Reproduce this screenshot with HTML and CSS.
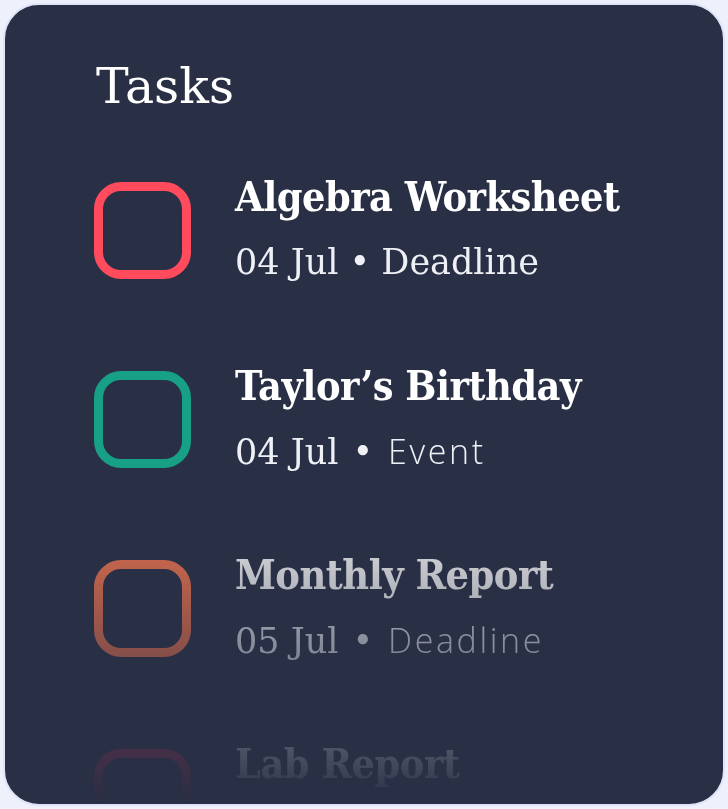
FILE: index.html
```html
<!DOCTYPE html>
<html lang="en">
<head>
<meta charset="utf-8">
<title>Tasks</title>
<link rel="stylesheet" href="styles.css">
</head>
<body>
<div class="card">
  <h1 class="heading">Tasks</h1>
  <ul class="list">
    <li class="task">
      <span class="check check-red"></span>
      <div class="info">
        <div class="name">Algebra Worksheet</div>
        <div class="meta"><span class="date">04 Jul • Deadline</span></div>
      </div>
    </li>
    <li class="task">
      <span class="check check-teal"></span>
      <div class="info">
        <div class="name">Taylor’s Birthday</div>
        <div class="meta"><span class="date">04 Jul</span><span class="dot">•</span><span class="kind">Event</span></div>
      </div>
    </li>
    <li class="task">
      <span class="check check-orange"></span>
      <div class="info">
        <div class="name">Monthly Report</div>
        <div class="meta"><span class="date">05 Jul</span><span class="dot">•</span><span class="kind">Deadline</span></div>
      </div>
    </li>
    <li class="task task-last">
      <span class="check check-pink"></span>
      <div class="info">
        <div class="name">Lab Report</div>
      </div>
    </li>
  </ul>
</div>
</body>
</html>
```
FILE: styles.css
```css
html, body {
  margin: 0;
  padding: 0;
}
body {
  background: #eef1fb;
  width: 728px;
  height: 809px;
  overflow: hidden;
}
.card {
  margin: 3px;
  width: 722px;
  height: 803px;
  box-sizing: border-box;
  border: 2px solid #dfe4f8;
  border-radius: 36px;
  background: #292f45;
  overflow: hidden;
  padding: 57px 0 0 89px;
  font-family: "DejaVu Serif", serif;
  color: #ffffff;
}
.heading {
  margin: 0 0 66px 0;
  padding-left: 2px;
  font-size: 49px;
  line-height: 49px;
  font-weight: normal;
}
.list {
  list-style: none;
  margin: 0;
  padding: 0;
  -webkit-mask-image: linear-gradient(to bottom, #000 0px, #000 300px, rgba(0,0,0,0) 627px);
  mask-image: linear-gradient(to bottom, #000 0px, #000 300px, rgba(0,0,0,0) 627px);
}
.task {
  display: flex;
  align-items: flex-start;
  gap: 44px;
  height: 189px;
}
.task-last {
  height: 120px;
}
.check {
  flex: none;
  width: 97px;
  height: 97px;
  box-sizing: border-box;
  border: 9px solid;
  border-radius: 27px;
  margin-top: 5px;
}
.check-red { border-color: #ff4b5c; }
.check-teal { border-color: #17a086; }
.check-orange { border-color: #f7764f; }
.check-pink { border-color: #d23352; }
.name {
  font-size: 41px;
  line-height: 41px;
  font-weight: bold;
  font-stretch: condensed;
  letter-spacing: -0.5px;
  white-space: nowrap;
}
.meta {
  margin-top: 26px;
  font-size: 35px;
  line-height: 36px;
  color: #eef0f6;
  white-space: nowrap;
}
.date {
  font-family: "DejaVu Serif", serif;
  font-weight: normal;
}
.dot {
  font-family: "DejaVu Serif", serif;
  margin: 0 15px 0 14px;
}
.kind {
  font-family: "Open Sans", sans-serif;
  font-weight: 300;
  font-size: 34px;
  letter-spacing: 2.6px;
}
```
